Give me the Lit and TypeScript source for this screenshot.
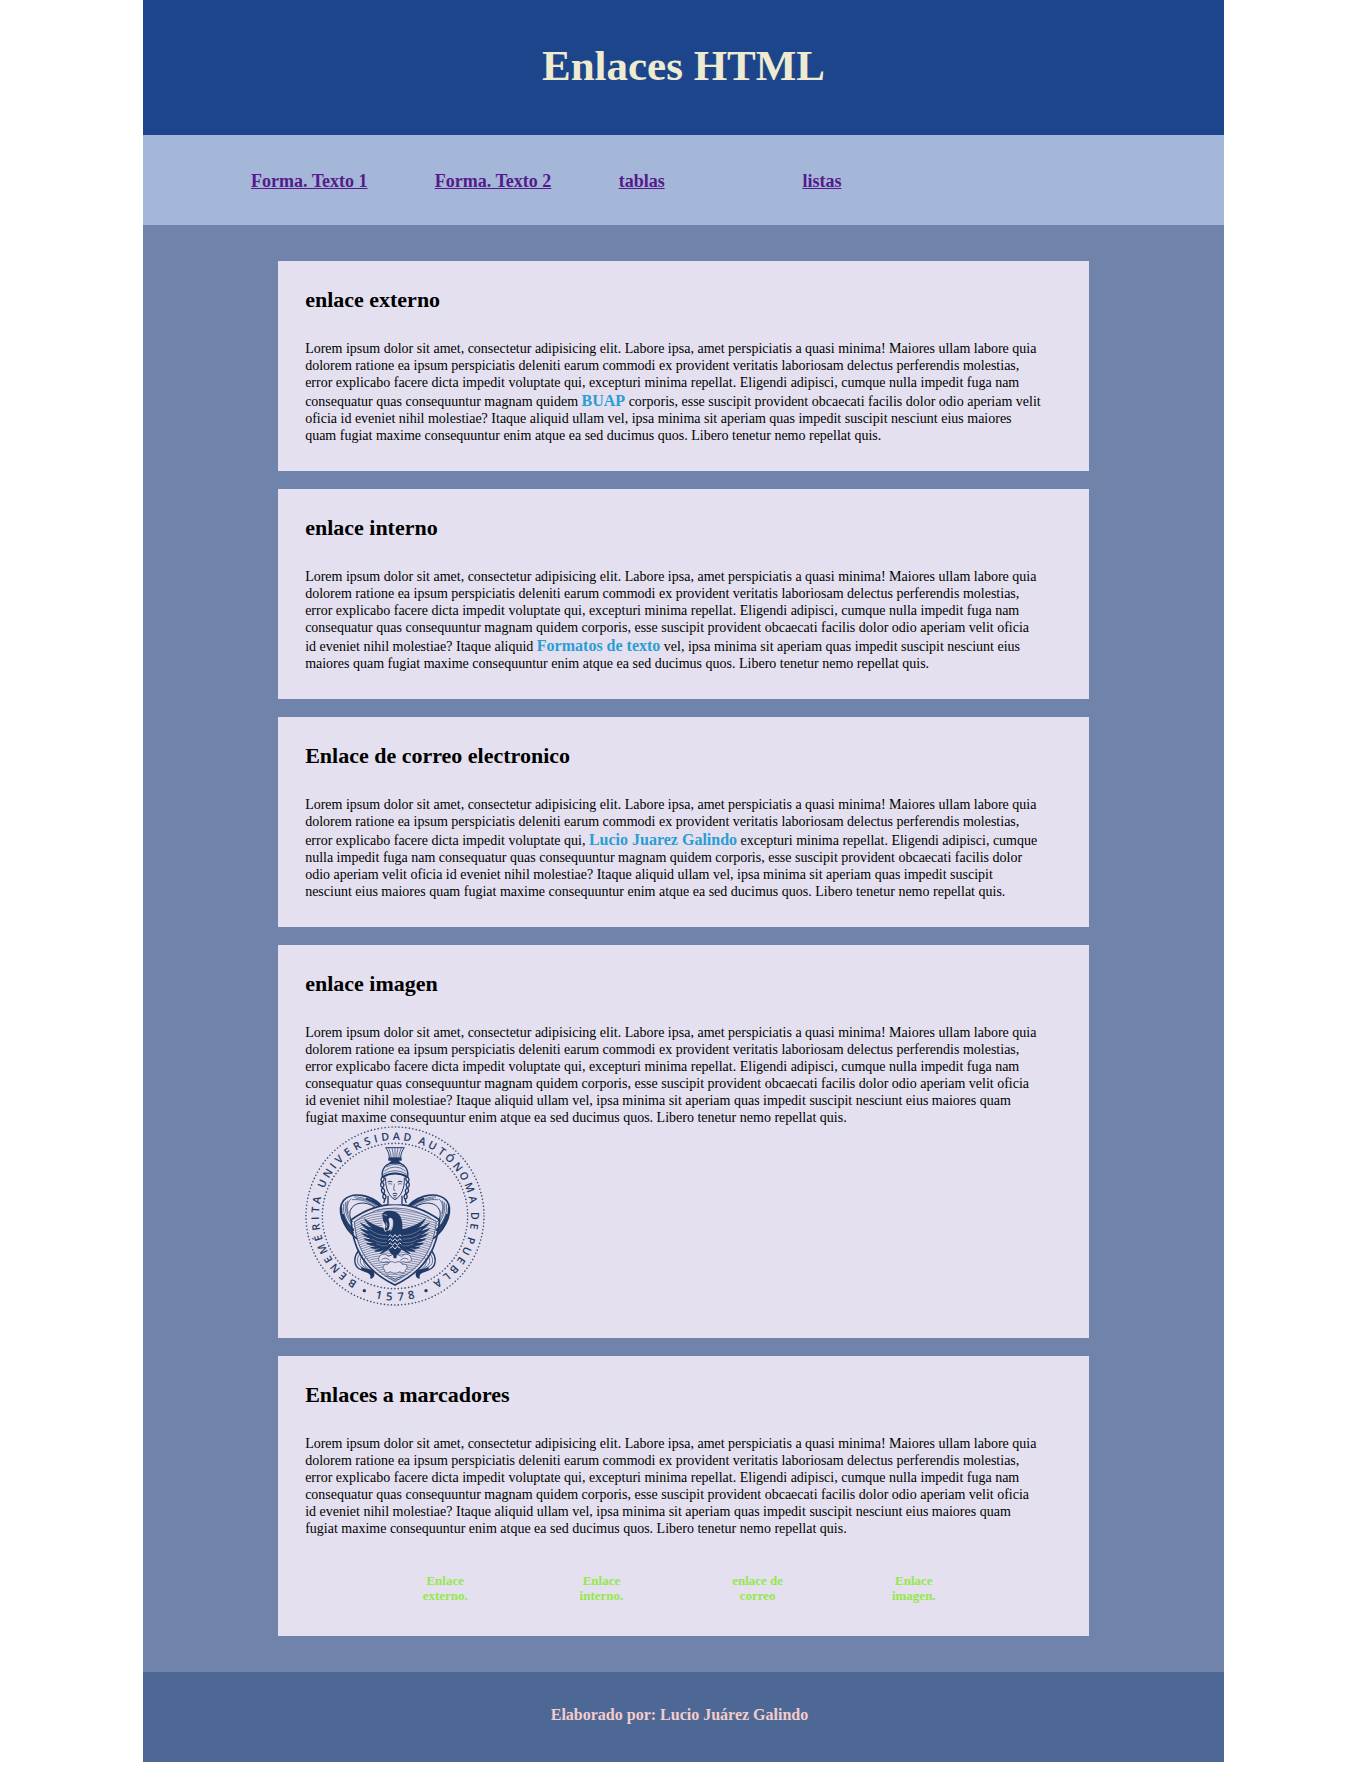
import { LitElement, html, svg, css } from "lit";
import { customElement } from "lit/decorators.js";

const INK = "#1f3a66";

/* Letters around the rim of the seal: character and clockwise angle from the top. */
const RIM: Array<[string, number]> = [
  ["B", 212.5], ["E", 221], ["N", 229], ["E", 237], ["M", 245.5], ["É", 254], ["R", 262], ["I", 268.5], ["T", 274.5], ["A", 281.5],
  ["U", 294], ["N", 302.5], ["I", 309], ["V", 315.5], ["E", 323.5], ["R", 331.5], ["S", 339.5], ["I", 346], ["D", 353], ["A", 1], ["D", 9],
  ["A", 20], ["U", 28], ["T", 36], ["Ó", 43.5], ["N", 52], ["O", 60], ["M", 69], ["A", 78],
  ["D", 90], ["E", 97.5],
  ["P", 108], ["U", 116], ["E", 124], ["B", 132], ["L", 139.5], ["A", 147.5],
];

/* Year at the foot of the seal, upright: digit and counter-clockwise angle from the bottom. */
const YEAR: Array<[string, number]> = [["1", 11.5], ["5", 4], ["7", -4], ["8", -11.5]];

/* Feather tips of one wing, from the highest to the lowest. */
const TIPS: Array<[number, number]> = [
  [206, 308], [194, 322], [193, 338], [198, 354], [204, 370], [213, 384], [224, 396], [238, 407], [255, 414],
];

const SHIELD = "M168 315Q232 268 300 268Q368 268 434 315C428 385 404 460 300 510C196 460 172 385 168 315Z";

@customElement("university-seal")
export class UniversitySeal extends LitElement {
  static styles = css`
    :host { display: block; }
    .seal { display: block; width: 180px; height: 180px; }
    .rim { font: 600 32px "Open Sans", "Noto Sans", sans-serif; fill: #1f3a66; }
    .year { font: 600 34px "Open Sans", "Noto Sans", sans-serif; fill: #1f3a66; }
  `;

  private half() {
    return svg`
      <g>
        <g fill="none" stroke=${INK} stroke-linecap="round">
          <path stroke-width="5" d="M258 270C226 240 174 228 146 256C124 284 142 336 184 370"/>
          <path stroke-width="3" d="M240 276C208 256 176 262 166 286C162 300 166 312 172 320"/>
          <path stroke-width="5" d="M139 278C137 304 150 334 174 354"/>
          <path stroke-width="2" d="M146 268C142 292 154 324 176 342M152 262C146 286 158 314 172 330M158 258C150 280 158 304 169 318M168 252C156 262 154 280 160 294M178 246C192 244 222 252 246 272M184 251C204 250 226 258 242 272M172 254C200 252 218 260 236 272M212 243C226 250 244 260 254 270"/>
          <path stroke-width="7" d="M216 252C230 256 244 264 252 270M144 300C150 318 160 334 174 345"/>
          <path stroke-width="4" d="M190 408C174 428 176 456 198 464C216 468 230 466 232 480"/>
          <path stroke-width="2" d="M196 414C182 432 184 452 204 458M203 420C190 436 194 450 214 460M211 428C202 440 206 450 220 462"/>
        </g>
        <path fill=${INK} d="M198 457C218 464 240 460 238 480C237 488 230 493 225 490C231 476 216 473 200 467Z"/>
        <g fill="none" stroke=${INK} stroke-width="4">
          <path d="M265 184C258 187 256 196 261 201C268 197 270 190 265 184ZM261 201C255 206 256 214 262 218C269 213 268 206 261 201ZM263 218C257 224 259 232 265 236C271 231 270 224 263 218ZM267 236C261 243 263 250 269 253C275 248 274 241 267 236ZM270 253L266 264"/>
        </g>
        <path fill=${INK} d="M292 350C262 360 238 356 220 342C224 374 248 396 286 402Z"/>
        ${TIPS.map(([x, y], i) => {
          const top = 344 + i * 5;
          const cx = (x + 286) / 2 - 8;
          const cy = (y + top) / 2 + 10;
          return svg`<path fill=${INK} d="M286 ${top}Q${cx} ${cy} ${x} ${y}Q${cx - 12} ${cy + 15} 286 ${top + 16}Z"/>`;
        })}
        <path fill="none" stroke="#e4e0ef" stroke-width="1" d="M222 342Q246 362 278 362M224 356Q246 374 278 372M232 372Q252 386 279 382M244 386Q260 396 280 392"/>
      </g>`;
  }

  render() {
    const hatch = Array.from({ length: 32 }, (_, i) => 282 + i * 7);
    return html`
      <svg class="seal" viewBox="30 33 540 540" aria-hidden="true">
        <defs><clipPath id="field"><path d=${SHIELD}/></clipPath></defs>
        <g fill="none" stroke=${INK} stroke-linecap="round" stroke-width="5" opacity="0.85">
          <circle cx="300" cy="303" r="267" pathLength="320" stroke-dasharray="0 2"/>
          <circle cx="300" cy="303" r="218" pathLength="264" stroke-dasharray="0 2"/>
        </g>
        ${RIM.map(([c, a]) => svg`<text class="rim" x="300" y="75" text-anchor="middle" transform="rotate(${a} 300 303)">${c}</text>`)}
        ${YEAR.map(([c, a]) => svg`<text class="year" x="300" y="557" text-anchor="middle" transform="rotate(${a} 300 303)">${c}</text>`)}
        <circle cx="208" cy="527" r="5" fill=${INK}/>
        <circle cx="393" cy="527" r="5" fill=${INK}/>

        <path d=${SHIELD} fill="#e4e0ef"/>
        <g clip-path="url(#field)" fill="none" stroke=${INK} stroke-width="2" opacity="0.75">
          ${hatch.map((y) => svg`<path d="M160 ${y + 34}Q230 ${y - 8} 300 ${y}T440 ${y + 34}"/>`)}
        </g>
        <path d=${SHIELD} fill="none" stroke="#e4e0ef" stroke-width="14"/>
        <path d=${SHIELD} fill="none" stroke=${INK} stroke-width="5"/>
        <path d="M178 320Q236 279 300 279Q364 279 424 320C416 386 396 450 300 499C204 450 184 386 178 320Z" fill="none" stroke=${INK} stroke-width="2"/>

        ${this.half()}
        <g transform="translate(600 0) scale(-1 1)">${this.half()}</g>

        <path fill="#e4e0ef" d="M284 306C296 306 296 336 282 346L270 350L262 330L264 312Z"/>
        <path fill=${INK} d="M262 302C260 291 276 285 292 288C314 291 325 312 322 345L324 380C322 406 312 418 300 426C288 418 278 406 276 380L278 356C291 350 297 335 294 316C291 305 280 306 281 315C285 327 285 340 277 347C270 349 267 342 271 336C274 327 265 324 264 314Z"/>
        <path fill="none" stroke="#e4e0ef" stroke-width="2" d="M266 299L276 301M273 322L276 330L273 339"/>
        <g fill="none" stroke="#e4e0ef" stroke-width="3">
          <path d="M280 364L286 359L293 367L300 359L307 367L314 359L320 364M280 376L286 371L293 379L300 371L307 379L314 371L320 376M281 388L286 383L293 391L300 383L307 391L314 383L319 388M284 400L293 394L300 402L307 394L316 400"/>
        </g>
        <path fill="#e4e0ef" stroke=${INK} stroke-width="2" d="M252 428C256 416 270 414 280 424L300 416L320 424C330 414 344 416 348 428C354 438 338 446 326 440L300 446L274 440C262 446 246 438 252 428Z"/>
        <path fill=${INK} d="M292 404H308L304 430H296Z"/>
        <path fill="#e4e0ef" stroke=${INK} stroke-width="2" d="M270 466C258 460 266 444 278 448C282 438 294 438 300 444C306 438 318 438 322 448C336 444 342 460 330 466C334 474 320 476 314 470C306 476 294 476 286 470C280 476 266 474 270 466Z"/>
        <path fill="none" stroke=${INK} stroke-width="2" d="M260 434Q272 424 284 436M316 436Q328 424 340 434M274 480L300 493L326 480"/>

        <path fill="#e4e0ef" d="M279 238H321V268H279Z"/>
        <path fill="none" stroke=${INK} stroke-width="4" d="M279 242V268M321 242V268"/>
        <path fill="none" stroke=${INK} stroke-width="3" d="M272 188C270 222 284 246 300 254C316 246 330 222 328 188"/>
        <path fill="#e4e0ef" stroke=${INK} stroke-width="4" d="M262 186C258 158 276 144 300 142C324 144 342 158 338 186C316 172 284 172 262 186Z"/>
        <path fill="none" stroke=${INK} stroke-width="2" d="M268 168Q300 144 332 168M274 156Q300 140 326 156M264 178Q300 156 336 178"/>
        <path fill="none" stroke=${INK} stroke-width="5" d="M262 186Q300 164 338 186"/>
        <path fill="none" stroke=${INK} stroke-width="3" d="M278 201Q285 196 292 201M308 201Q315 196 322 201M293 237Q300 232 307 237M295 242H305"/>
        <path fill="none" stroke=${INK} stroke-width="2" d="M280 207Q286 204 291 208M309 208Q315 204 320 207M298 206L296 225L301 227M296 248H304"/>
        <path fill="#e4e0ef" stroke=${INK} stroke-width="3" d="M272 98H328C322 106 317 116 317 129H283C283 116 278 106 272 98Z"/>
        <path fill="none" stroke=${INK} stroke-width="2" d="M281 99Q288 114 289 129M291 99Q295 114 295 129M300 99V129M309 99Q305 114 305 129M319 99Q312 114 311 129"/>
        <path fill=${INK} d="M280 128H320V137H280ZM289 137H311L320 146H280Z"/>
      </svg>
    `;
  }
}

const NAV = ["Forma. Texto 1", "Forma. Texto 2", "tablas", "listas"];

const MARKS = [
  { href: "#externo", label: "Enlace externo." },
  { href: "#interno", label: "Enlace interno." },
  { href: "#correo", label: "enlace de correo" },
  { href: "#imagen", label: "Enlace imagen." },
];

const LOREM =
  "Lorem ipsum dolor sit amet, consectetur adipisicing elit. Labore ipsa, amet perspiciatis a quasi minima! Maiores ullam labore quia dolorem ratione ea ipsum perspiciatis deleniti earum commodi ex provident veritatis laboriosam delectus perferendis molestias, error explicabo facere dicta impedit voluptate qui, excepturi minima repellat. Eligendi adipisci, cumque nulla impedit fuga nam consequatur quas consequuntur magnam quidem corporis, esse suscipit provident obcaecati facilis dolor odio aperiam velit oficia id eveniet nihil molestiae? Itaque aliquid ullam vel, ipsa minima sit aperiam quas impedit suscipit nesciunt eius maiores quam fugiat maxime consequuntur enim atque ea sed ducimus quos. Libero tenetur nemo repellat quis.";

/* Splits the sample paragraph after one phrase and continues it from another. */
const before = (mark: string) => LOREM.slice(0, LOREM.indexOf(mark));
const from = (mark: string) => LOREM.slice(LOREM.indexOf(mark));

@customElement("app-root")
export class AppRoot extends LitElement {
  static styles = css`
    :host {
      display: block;
      font-family: "Liberation Serif", "Times New Roman", serif;
      color: #000;
    }
    .page { max-width: 1081px; margin: 0 auto; }
    .header { background: #1d458c; padding: 36px 0 40px; text-align: center; }
    .title { margin: 0; font-size: 43px; line-height: 59px; color: #eeebd0; }
    .nav { background: #a5b7d8; padding: 36px 10% 34px; }
    .menu {
      display: grid;
      grid-template-columns: repeat(4, 1fr);
      margin: 0;
      padding: 0 15% 0 0;
      list-style: none;
      font-size: 18px;
      line-height: 20px;
      font-weight: bold;
    }
    .menu a { color: #551a8b; }
    .main {
      display: flex;
      flex-direction: column;
      gap: 18px;
      background: #7084ab;
      padding: 36px 12.5%;
    }
    .card { background: #e4e0ef; padding: 27px; }
    .heading { margin: 0 0 28px; font-size: 22px; line-height: 24px; }
    .text { margin: 0; padding-right: 19px; font-size: 14px; line-height: 17px; }
    .link { color: #2a9dd4; font-size: 16px; line-height: 19px; font-weight: bold; text-decoration: none; }
    .picture { display: block; width: fit-content; margin-bottom: 5px; }
    .marks {
      display: grid;
      grid-template-columns: repeat(4, 1fr);
      justify-items: center;
      margin: 0;
      padding: 36px 70px 6px 62px;
      list-style: none;
      text-align: center;
      font-size: 13px;
      line-height: 15px;
      font-weight: bold;
    }
    .mark { width: 54px; }
    .mark a { color: #94e84a; text-decoration: none; }
    .footer { background: #4d6894; padding: 34px 8px 38px 0; text-align: center; }
    .credit { margin: 0; font-size: 16px; line-height: 18px; font-weight: bold; color: #f4cccc; }
  `;

  render() {
    return html`
      <div class="page">
        <header class="header"><h1 class="title">Enlaces HTML</h1></header>
        <nav class="nav">
          <ul class="menu">
            ${NAV.map((label) => html`<li><a href="#">${label}</a></li>`)}
          </ul>
        </nav>
        <main class="main">
          <section class="card" id="externo">
            <h2 class="heading">enlace externo</h2>
            <p class="text">${before("corporis")}<a class="link" href="#buap">BUAP</a> ${from("corporis")}</p>
          </section>
          <section class="card" id="interno">
            <h2 class="heading">enlace interno</h2>
            <p class="text">${before("ullam vel")}<a class="link" href="#formatos">Formatos de texto</a> ${from("vel, ipsa")}</p>
          </section>
          <section class="card" id="correo">
            <h2 class="heading">Enlace de correo electronico</h2>
            <p class="text">${before("excepturi")}<a class="link" href="#lucio">Lucio Juarez Galindo</a> ${from("excepturi")}</p>
          </section>
          <section class="card" id="imagen">
            <h2 class="heading">enlace imagen</h2>
            <p class="text">${LOREM}</p>
            <a class="picture" href="#buap" aria-label="Benemérita Universidad Autónoma de Puebla"><university-seal></university-seal></a>
          </section>
          <section class="card">
            <h2 class="heading">Enlaces a marcadores</h2>
            <p class="text">${LOREM}</p>
            <ul class="marks">
              ${MARKS.map((m) => html`<li class="mark"><a href=${m.href}>${m.label}</a></li>`)}
            </ul>
          </section>
        </main>
        <footer class="footer"><p class="credit">Elaborado por: Lucio Juárez Galindo</p></footer>
      </div>
    `;
  }
}
